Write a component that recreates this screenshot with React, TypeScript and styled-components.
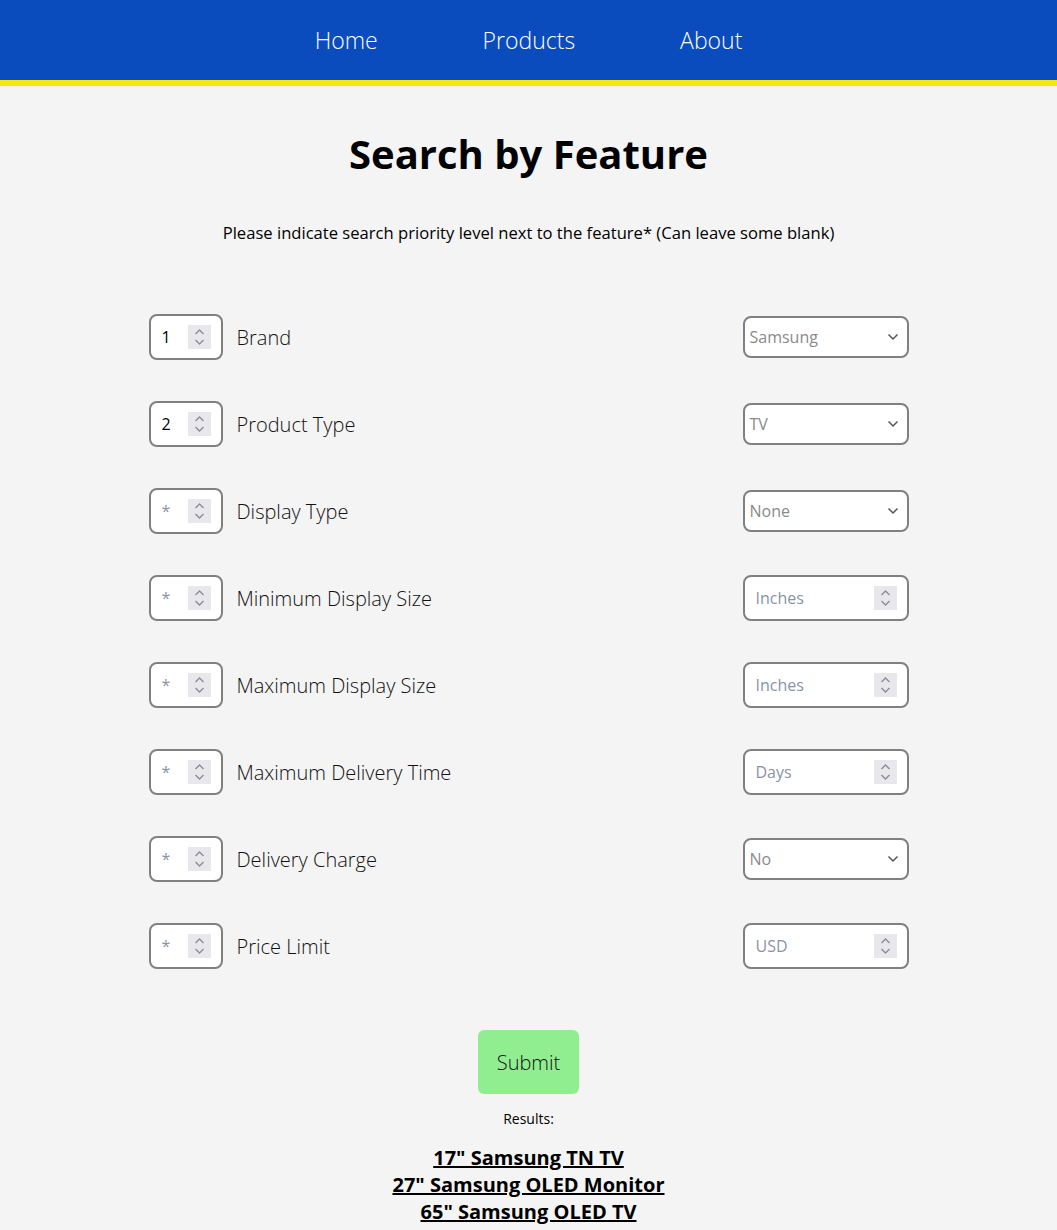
import { createGlobalStyle, styled } from "styled-components";

const GlobalStyle = createGlobalStyle`
  body {
    margin: 0;
    background: #f4f4f4;
    font-family: "Open Sans", "Liberation Sans", sans-serif;
    color: #000;
  }
`;

const Nav = styled.nav`
  height: 80px;
  background: #0a4bbd;
  border-bottom: 6px solid #f7e615;
  display: flex;
  justify-content: center;
  align-items: center;
  gap: 105px;
`;

const NavLink = styled.a`
  color: #fff;
  font-size: 23px;
  font-weight: 300;
  text-decoration: none;
  line-height: 1;
`;

const Title = styled.h1`
  margin: 41px 0 0;
  text-align: center;
  font-size: 40px;
  line-height: 54px;
  font-weight: 700;
`;

const Subtitle = styled.p`
  margin: 41px 0 0;
  text-align: center;
  font-size: 16.6px;
  line-height: 22px;
`;

const Form = styled.form`
  width: 760px;
  margin: 70px auto 0;
  display: flex;
  flex-direction: column;
  gap: 41px;
`;

const Row = styled.div`
  display: flex;
  align-items: center;
  height: 46px;
`;

const Label = styled.label`
  flex: 1;
  margin-left: 14px;
  font-size: 20px;
  font-weight: 300;
  color: #111;
`;

const Box = styled.div<{ $width: number }>`
  width: ${({ $width }) => $width}px;
  height: 46px;
  box-sizing: border-box;
  border: 2px solid #808080;
  border-radius: 8px;
  background: #fff;
  display: flex;
  align-items: center;
  padding: 0 10px 0 11px;
`;

const BoxInput = styled.input<{ $muted?: boolean }>`
  flex: 1;
  min-width: 0;
  border: none;
  outline: none;
  background: transparent;
  font-family: inherit;
  font-size: 16px;
  color: ${({ $muted }) => ($muted ? "#808080" : "#000")};
  padding: 0;

  &::placeholder {
    color: #8a93a6;
  }
`;

const Spinner = styled.span`
  width: 23px;
  height: 24px;
  background: #e8e8ec;
  display: flex;
  align-items: center;
  justify-content: center;
`;

const Select = styled.div`
  width: 166px;
  height: 42px;
  box-sizing: border-box;
  border: 2px solid #808080;
  border-radius: 8px;
  background: #fff;
  display: flex;
  align-items: center;
  justify-content: space-between;
  padding: 0 8px 0 5px;
  font-size: 16px;
  color: #8a8a8a;
`;

const Center = styled.div`
  display: flex;
  flex-direction: column;
  align-items: center;
`;

const Submit = styled.button`
  margin-top: 61px;
  width: 101px;
  height: 64px;
  border: none;
  border-radius: 6px;
  background: #90ee90;
  font-family: inherit;
  font-size: 20px;
  font-weight: 300;
  color: #111;
`;

const ResultsLabel = styled.p`
  margin: 15px 0 0;
  font-size: 14px;
  line-height: 20px;
`;

const Results = styled.div`
  margin-top: 15px;
  display: flex;
  flex-direction: column;
  align-items: center;
`;

const ResultLink = styled.a`
  color: #000;
  font-size: 20px;
  font-weight: 700;
  line-height: 27px;
  text-decoration: underline;
`;

const SpinIcon = () => (
  <Spinner>
    <svg width="11" height="18" viewBox="0 0 11 18" fill="none" stroke="#8c8c96" strokeWidth="1.4">
      <path d="M1.5 6 L5.5 2 L9.5 6" />
      <path d="M1.5 12 L5.5 16 L9.5 12" />
    </svg>
  </Spinner>
);

const Chevron = () => (
  <svg width="12" height="8" viewBox="0 0 12 8" fill="none" stroke="#555" strokeWidth="1.5">
    <path d="M1.5 1.5 L6 6 L10.5 1.5" />
  </svg>
);

type Feature = {
  priority: string;
  label: string;
  kind: "select" | "number";
  value: string;
};

const features: Feature[] = [
  { priority: "1", label: "Brand", kind: "select", value: "Samsung" },
  { priority: "2", label: "Product Type", kind: "select", value: "TV" },
  { priority: "*", label: "Display Type", kind: "select", value: "None" },
  { priority: "*", label: "Minimum Display Size", kind: "number", value: "Inches" },
  { priority: "*", label: "Maximum Display Size", kind: "number", value: "Inches" },
  { priority: "*", label: "Maximum Delivery Time", kind: "number", value: "Days" },
  { priority: "*", label: "Delivery Charge", kind: "select", value: "No" },
  { priority: "*", label: "Price Limit", kind: "number", value: "USD" },
];

const results = [
  '17" Samsung TN TV',
  '27" Samsung OLED Monitor',
  '65" Samsung OLED TV',
];

export default function App() {
  return (
    <>
      <GlobalStyle />
      <Nav>
        <NavLink href="#">Home</NavLink>
        <NavLink href="#">Products</NavLink>
        <NavLink href="#">About</NavLink>
      </Nav>
      <Title>Search by Feature</Title>
      <Subtitle>
        Please indicate search priority level next to the feature* (Can leave some blank)
      </Subtitle>
      <Form onSubmit={(e) => e.preventDefault()}>
        {features.map((f) => (
          <Row key={f.label}>
            <Box $width={74}>
              <BoxInput
                readOnly
                value={f.priority === "*" ? "" : f.priority}
                placeholder={f.priority === "*" ? "*" : undefined}
                $muted={f.priority === "*"}
              />
              <SpinIcon />
            </Box>
            <Label>{f.label}</Label>
            {f.kind === "select" ? (
              <Select>
                <span>{f.value}</span>
                <Chevron />
              </Select>
            ) : (
              <Box $width={166}>
                <BoxInput readOnly placeholder={f.value} />
                <SpinIcon />
              </Box>
            )}
          </Row>
        ))}
      </Form>
      <Center>
        <Submit type="button">Submit</Submit>
        <ResultsLabel>Results:</ResultsLabel>
        <Results>
          {results.map((r) => (
            <ResultLink key={r} href="#">
              {r}
            </ResultLink>
          ))}
        </Results>
      </Center>
    </>
  );
}
